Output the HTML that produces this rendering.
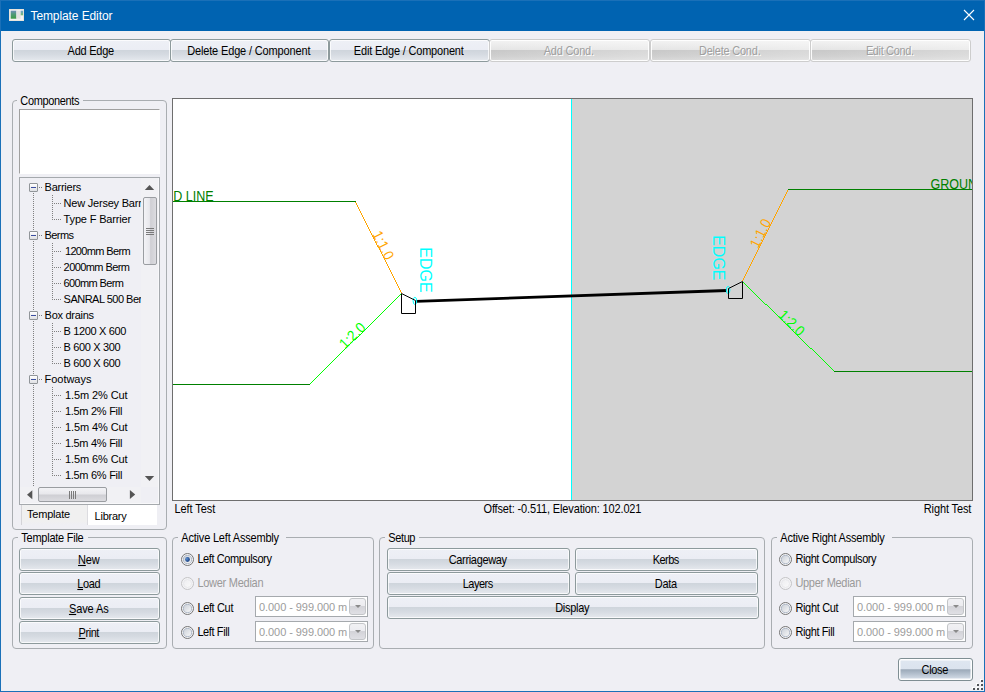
<!DOCTYPE html>
<html>
<head>
<meta charset="utf-8">
<title>Template Editor</title>
<style>
*{box-sizing:border-box;margin:0;padding:0}
html,body{width:985px;height:692px;overflow:hidden}
body{position:relative;background:#efeff4;font-family:"Liberation Sans",sans-serif;font-size:11px;color:#000}
.abs{position:absolute}
#win{position:absolute;left:0;top:0;width:985px;height:692px;border:1px solid #1a70b8;border-top:none;background:#efeff4}
#title{position:absolute;left:0;top:0;width:985px;height:31px;background:#0063b1;color:#fff;border-top:1px solid #1a70b8;border-left:1px solid #1a70b8;border-right:1px solid #1a70b8}
#title .t{position:absolute;left:29.5px;top:8px;font-size:12px;line-height:15px;white-space:nowrap;letter-spacing:-.1px}
.s{display:inline-block;transform:scaleY(1.08);transform-origin:50% 0;white-space:nowrap}
.btn{position:absolute;height:23px;border:1px solid #8d9a9c;border-radius:3px;
 background:linear-gradient(to bottom,#eef0f6 0,#ebedf4 46%,#cfd5dc 50%,#d6dbe2 70%,#e6e9ee 100%);
 box-shadow:inset 0 0 0 1px rgba(255,255,255,.75);
 text-align:center;line-height:21px;font-size:11px;white-space:nowrap;color:#000;padding-right:1.5px}
.btn .s{line-height:15px;vertical-align:top;margin-top:3px}
.btn.dis{color:#a0a0a0;border-color:#cdcdcd;text-shadow:1px 1px 0 #fff;box-shadow:inset 0 0 0 1px rgba(255,255,255,.9);
 background:linear-gradient(to right,rgba(255,255,255,0) 0,rgba(255,255,255,.3) 100%),linear-gradient(to bottom,#f3f3f3 0,#e4e4e4 48%,#c8c8c8 50%,#cecece 75%,#dadada 100%)}
.btn.def{border-color:#7f8e93;box-shadow:inset 0 0 0 1.5px rgba(255,255,255,.95);background:linear-gradient(to bottom,#dfe7f1 0,#dbe3ee 47%,#9caab9 51%,#b5c1cf 72%,#dae2ec 100%)}
.gb{position:absolute;border:1px solid #a9adb1;border-radius:4px}
.gb>.lg{position:absolute;top:-8px;left:5px;padding:0 2px 0 3.3px;background:#efeff4;font-size:11px;line-height:15px;white-space:nowrap}
.rad{position:absolute;width:13px;height:13px;border-radius:50%;border:1px solid #6f7476;
 background:radial-gradient(circle at 50% 50%,#e8e8ec 0,#d4d6da 55%,#b9bcc0 100%);box-shadow:inset 0 0 0 1px #f4f4f6}
.rad.dis{border-color:#c2c4c6;background:#f2f2f5;box-shadow:none}
.rad.on::after{content:"";position:absolute;left:3px;top:3px;width:5px;height:5px;border-radius:50%;background:radial-gradient(circle at 40% 35%,#5f8fd0,#1c3f86)}
.rl{position:absolute;font-size:11px;line-height:15px;white-space:nowrap}
.rl.dis{color:#9a9a9a}
.cb{position:absolute;width:113px;height:21px;border:1px solid #a5a9ad;background:#fff}
.cb .tx{position:absolute;left:3px;top:2.7px;font-size:11px;line-height:15px;color:#9c9c9c;white-space:nowrap}
.cb .dd{position:absolute;right:1px;top:1px;width:17px;height:17px;border:1px solid #c3c5c8;border-radius:3px;
 background:linear-gradient(to bottom,#f1f1f4 0,#ececf0 46%,#d3d3d8 50%,#e0e0e5 100%)}
.cb .dd::after{content:"";position:absolute;left:4.5px;top:5.5px;border-left:3px solid transparent;border-right:3px solid transparent;border-top:3px solid #8a8a8a}
.tree{position:absolute;left:19px;top:177px;width:141px;height:328px;border:1px solid #a5a9ad;background:#efeff4;overflow:hidden}
.ti{position:absolute;font-size:11px;line-height:16px;white-space:nowrap}
.pm{position:absolute;width:9px;height:9px;border:1px solid #919599;border-radius:1px;background:linear-gradient(#fff,#dfe0e4)}
.pm::after{content:"";position:absolute;left:1px;top:3px;width:5px;height:1px;background:#3b4ea0}
.dv{position:absolute;width:1px;background:repeating-linear-gradient(to bottom,#808080 0,#808080 1px,transparent 1px,transparent 2px)}
.dh{position:absolute;height:1px;background:repeating-linear-gradient(to right,#808080 0,#808080 1px,transparent 1px,transparent 2px)}
.vth{border:1px solid #9a9da1;border-radius:2px;background:linear-gradient(to right,#f3f3f6 0,#e8e8ec 45%,#cfcfd4 55%,#dcdce0 100%)}
.hth{border:1px solid #9a9da1;border-radius:2px;background:linear-gradient(to bottom,#f3f3f6 0,#e8e8ec 45%,#cfcfd4 55%,#dcdce0 100%)}
</style>
</head>
<body>
<div id="win"></div>
<div id="title">
 <svg class="abs" style="left:8px;top:8px" width="15" height="12" viewBox="0 0 15 12">
  <defs><linearGradient id="ig" x1="0" y1="0" x2="0" y2="1"><stop offset="0" stop-color="#6f8fb8"/><stop offset=".45" stop-color="#4f9a78"/><stop offset="1" stop-color="#3a9a44"/></linearGradient>
  <linearGradient id="ig2" x1="0" y1="0" x2="0" y2="1"><stop offset="0" stop-color="#6f9fd4"/><stop offset="1" stop-color="#74bd6c"/></linearGradient></defs>
  <rect x="0" y="0" width="15" height="12" fill="#e4e0d8"/>
  <rect x=".8" y=".8" width="13.4" height="10.4" fill="#f3f3f3"/>
  <rect x="1.7" y="1.7" width="5.7" height="8" fill="url(#ig)"/>
  <rect x="7.4" y="1.7" width="4.3" height="8" fill="#e1e1e1"/>
  <rect x="11.7" y="1.7" width="2.4" height="4.6" fill="url(#ig2)"/>
 </svg>
 <div class="t">Template Editor</div>
 <svg class="abs" style="left:962px;top:8px" width="12" height="12" viewBox="0 0 12 12"><path d="M1 1 L11 11 M11 1 L1 11" stroke="#fff" stroke-width="1.1" fill="none"/></svg>
</div>
<svg width="0" height="0" style="position:absolute"><defs><linearGradient id="rg" x1="0" y1="0" x2="1" y2="1"><stop offset="0" stop-color="#c9ced6"/><stop offset="1" stop-color="#fafafa"/></linearGradient><linearGradient id="rgd" x1="0" y1="0" x2="1" y2="1"><stop offset="0" stop-color="#ededf0"/><stop offset="1" stop-color="#fafafa"/></linearGradient><radialGradient id="rdot" cx=".35" cy=".35" r=".8"><stop offset="0" stop-color="#5d8fd2"/><stop offset=".6" stop-color="#2a5596"/><stop offset="1" stop-color="#1c3a78"/></radialGradient></defs></svg>
<div class="btn" style="left:12px;top:39px;width:159px"><span class="s" style="letter-spacing:-0.254px">Add Edge</span></div>
<div class="btn" style="left:170px;top:39px;width:159px"><span class="s" style="letter-spacing:-0.148px">Delete Edge / Component</span></div>
<div class="btn" style="left:329px;top:39px;width:161px"><span class="s" style="letter-spacing:-0.188px">Edit Edge / Component</span></div>
<div class="btn dis" style="left:489px;top:39px;width:161px"><span class="s" style="letter-spacing:-0.198px">Add Cond.</span></div>
<div class="btn dis" style="left:650px;top:39px;width:161px"><span class="s" style="letter-spacing:-0.227px">Delete Cond.</span></div>
<div class="btn dis" style="left:810px;top:39px;width:161px"><span class="s" style="letter-spacing:-0.367px">Edit Cond.</span></div>
<div class="gb" style="left:12px;top:100px;width:155px;height:430px"><div class="lg" style="left:4px;padding-right:3.6px"><span class="s" style="letter-spacing:-0.348px">Components</span></div></div>
<div class="abs" style="left:19px;top:109px;width:141px;height:65px;border:1px solid #a0a0a0;border-right-color:#fff;border-bottom-color:#fff;background:#fff"></div>
<div class="tree">
<div class="dv" style="left:13px;top:15px;height:37px"></div>
<div class="dv" style="left:13px;top:63px;height:69px"></div>
<div class="dv" style="left:13px;top:143px;height:53px"></div>
<div class="dv" style="left:13px;top:207px;height:101px"></div>
<div class="dh" style="left:19px;top:9px;width:3px"></div>
<div class="pm" style="left:9px;top:5px"></div>
<div class="ti" style="left:24.6px;top:1px"><span style="letter-spacing:-0.252px">Barriers</span></div>
<div class="dv" style="left:32px;top:17px;height:25px"></div>
<div class="dh" style="left:32px;top:25px;width:9px"></div>
<div class="ti" style="left:43.6px;top:17px"><span style="letter-spacing:-0.220px">New Jersey Barrier</span></div>
<div class="dh" style="left:32px;top:41px;width:9px"></div>
<div class="ti" style="left:43.6px;top:33px"><span style="letter-spacing:-0.163px">Type F Barrier</span></div>
<div class="dh" style="left:19px;top:57px;width:3px"></div>
<div class="pm" style="left:9px;top:53px"></div>
<div class="ti" style="left:24.6px;top:49px"><span style="letter-spacing:-0.596px">Berms</span></div>
<div class="dv" style="left:32px;top:65px;height:57px"></div>
<div class="dh" style="left:32px;top:73px;width:9px"></div>
<div class="ti" style="left:44.9px;top:65px"><span style="letter-spacing:-0.631px">1200mm Berm</span></div>
<div class="dh" style="left:32px;top:89px;width:9px"></div>
<div class="ti" style="left:43.6px;top:81px"><span style="letter-spacing:-0.576px">2000mm Berm</span></div>
<div class="dh" style="left:32px;top:105px;width:9px"></div>
<div class="ti" style="left:43.6px;top:97px"><span style="letter-spacing:-0.643px">600mm Berm</span></div>
<div class="dh" style="left:32px;top:121px;width:9px"></div>
<div class="ti" style="left:43.6px;top:113px"><span style="letter-spacing:-0.510px">SANRAL 500 Berm</span></div>
<div class="dh" style="left:19px;top:137px;width:3px"></div>
<div class="pm" style="left:9px;top:133px"></div>
<div class="ti" style="left:24.6px;top:129px"><span style="letter-spacing:-0.278px">Box drains</span></div>
<div class="dv" style="left:32px;top:145px;height:41px"></div>
<div class="dh" style="left:32px;top:153px;width:9px"></div>
<div class="ti" style="left:43.6px;top:145px"><span style="letter-spacing:-0.356px">B 1200 X 600</span></div>
<div class="dh" style="left:32px;top:169px;width:9px"></div>
<div class="ti" style="left:43.6px;top:161px"><span style="letter-spacing:-0.342px">B 600 X 300</span></div>
<div class="dh" style="left:32px;top:185px;width:9px"></div>
<div class="ti" style="left:43.6px;top:177px"><span style="letter-spacing:-0.342px">B 600 X 600</span></div>
<div class="dh" style="left:19px;top:201px;width:3px"></div>
<div class="pm" style="left:9px;top:197px"></div>
<div class="ti" style="left:24.6px;top:193px"><span style="letter-spacing:-0.035px">Footways</span></div>
<div class="dv" style="left:32px;top:209px;height:89px"></div>
<div class="dh" style="left:32px;top:217px;width:9px"></div>
<div class="ti" style="left:44.9px;top:209px"><span style="letter-spacing:-0.081px">1.5m 2% Cut</span></div>
<div class="dh" style="left:32px;top:233px;width:9px"></div>
<div class="ti" style="left:44.9px;top:225px"><span style="letter-spacing:-0.278px">1.5m 2% Fill</span></div>
<div class="dh" style="left:32px;top:249px;width:9px"></div>
<div class="ti" style="left:44.9px;top:241px"><span style="letter-spacing:-0.081px">1.5m 4% Cut</span></div>
<div class="dh" style="left:32px;top:265px;width:9px"></div>
<div class="ti" style="left:44.9px;top:257px"><span style="letter-spacing:-0.278px">1.5m 4% Fill</span></div>
<div class="dh" style="left:32px;top:281px;width:9px"></div>
<div class="ti" style="left:44.9px;top:273px"><span style="letter-spacing:-0.081px">1.5m 6% Cut</span></div>
<div class="dh" style="left:32px;top:297px;width:9px"></div>
<div class="ti" style="left:44.9px;top:289px"><span style="letter-spacing:-0.278px">1.5m 6% Fill</span></div>

<div class="abs" style="left:121px;top:0;width:17px;height:309px;background:#f1f1f4"></div>
<div class="abs" style="left:0;top:309px;width:121px;height:16px;background:#f1f1f4"></div>
<div class="abs" style="left:138px;top:0;width:1px;height:326px;background:#f8f8fa"></div>
<div class="abs" style="left:0;top:325px;width:139px;height:1px;background:#f8f8fa"></div>
<svg class="abs" style="left:0;top:0" width="139" height="326" viewBox="0 0 139 326">
 <path d="M124.8 12 L129.5 7 L134.2 12 Z" fill="#555"/>
 <path d="M124.8 298 L129.5 303 L134.2 298 Z" fill="#555"/>
 <path d="M12.3 312.3 L7 316.8 L12.3 321.3 Z" fill="#555"/>
 <path d="M109.9 312 L115.2 316.5 L109.9 321 Z" fill="#555"/>
</svg>
<div class="abs vth" style="left:122.8px;top:18.7px;width:14px;height:68.5px"></div>
<svg class="abs" style="left:126px;top:50px" width="8" height="8" viewBox="0 0 8 8" shape-rendering="crispEdges"><path d="M0 .5H8M0 2.5H8M0 4.5H8M0 6.5H8" stroke="#7a7a7a" stroke-width="1"/></svg>
<div class="abs hth" style="left:18.4px;top:309.4px;width:68.2px;height:14.4px"></div>
<svg class="abs" style="left:49px;top:313px" width="8" height="8" viewBox="0 0 8 8" shape-rendering="crispEdges"><path d="M.5 0V8M2.5 0V8M4.5 0V8M6.5 0V8" stroke="#7a7a7a" stroke-width="1"/></svg>
</div>
<div class="abs" style="left:21px;top:505px;width:67px;height:20px;border-left:1px solid #d4d4d8;border-right:1px solid #dcdce0;background:linear-gradient(to bottom,#f0f0f0 0,#f0f0f0 80%,#efeff4 100%);font-size:11px;line-height:15px"><span class="abs" style="left:5px;top:2px;letter-spacing:-0.205px">Template</span></div>
<div class="abs" style="left:88px;top:505px;width:69px;height:20px;background:#fff;font-size:11px;line-height:15px"><span class="abs" style="left:6.5px;top:4px;letter-spacing:-0.218px">Library</span></div>
<div class="abs" style="left:172px;top:98px;width:801px;height:403px;border:1px solid #6e6e6e;background:#fff;overflow:hidden">
<svg class="abs" style="left:0;top:0" width="799" height="401" viewBox="173 99 799 401" font-family="Liberation Sans, sans-serif">
<rect x="572" y="99" width="400" height="401" fill="#d3d3d3"/>
<rect x="571" y="99" width="1" height="401" fill="#00ffff"/>
<g fill="none" stroke-width="1" shape-rendering="crispEdges">
<path d="M173 201.5H356M173 384.5H310M788 189.5H972M834 371.5H972" stroke="#008000"/>
<path d="M355.5 202v1M356.5 203v2M357.5 205v2M358.5 207v2M359.5 209v2M360.5 211v2M361.5 213v2M362.5 215v2M363.5 217v2M364.5 219v2M365.5 221v2M366.5 223v2M367.5 225v2M368.5 227v2M369.5 229v2M370.5 231v2M371.5 233v2M372.5 235v2M373.5 237v2M374.5 239v2M375.5 241v2M376.5 243v2M377.5 245v2M378.5 247v1M379.5 248v2M380.5 250v2M381.5 252v2M382.5 254v2M383.5 256v2M384.5 258v2M385.5 260v2M386.5 262v2M387.5 264v2M388.5 266v2M389.5 268v2M390.5 270v2M391.5 272v2M392.5 274v2M393.5 276v2M394.5 278v2M395.5 280v2M396.5 282v2M397.5 284v2M398.5 286v2M399.5 288v2M400.5 290v2M401.5 292v1" stroke="#ffa500"/>
<path d="M400 294.5h1M399 295.5h1M398 296.5h1M397 297.5h1M396 298.5h1M395 299.5h1M394 300.5h1M393 301.5h1M392 302.5h1M391 303.5h1M390 304.5h1M389 305.5h1M388 306.5h1M387 307.5h1M386 308.5h1M385 309.5h1M384 310.5h1M383 311.5h1M382 312.5h1M381 313.5h1M380 314.5h1M379 315.5h1M378 316.5h1M377 317.5h1M376 318.5h1M375 319.5h1M374 320.5h1M373 321.5h1M372 322.5h1M371 323.5h1M370 324.5h1M369 325.5h1M368 326.5h1M367 327.5h1M366 328.5h1M365 329.5h1M364 330.5h1M363 331.5h1M362 332.5h1M361 333.5h1M360 334.5h1M359 335.5h1M358 336.5h1M357 337.5h1M356 338.5h1M354 339.5h2M353 340.5h1M352 341.5h1M351 342.5h1M350 343.5h1M349 344.5h1M348 345.5h1M347 346.5h1M346 347.5h1M345 348.5h1M344 349.5h1M343 350.5h1M342 351.5h1M341 352.5h1M340 353.5h1M339 354.5h1M338 355.5h1M337 356.5h1M336 357.5h1M335 358.5h1M334 359.5h1M333 360.5h1M332 361.5h1M331 362.5h1M330 363.5h1M329 364.5h1M328 365.5h1M327 366.5h1M326 367.5h1M325 368.5h1M324 369.5h1M323 370.5h1M322 371.5h1M321 372.5h1M320 373.5h1M319 374.5h1M318 375.5h1M317 376.5h1M316 377.5h1M315 378.5h1M314 379.5h1M313 380.5h1M312 381.5h1M311 382.5h1M310 383.5h1" stroke="#00ff00"/>
<path d="M787.5 190v2M786.5 192v2M785.5 194v2M784.5 196v2M783.5 198v2M782.5 200v2M781.5 202v2M780.5 204v2M779.5 206v2M778.5 208v2M777.5 210v2M776.5 212v2M775.5 214v2M774.5 216v2M773.5 218v2M772.5 220v2M771.5 222v2M770.5 224v2M769.5 226v2M768.5 228v2M767.5 230v2M766.5 232v2M765.5 234v2M764.5 236v2M763.5 238v2M762.5 240v2M761.5 242v2M760.5 244v2M759.5 246v2M758.5 248v2M757.5 250v2M756.5 252v2M755.5 254v2M754.5 256v2M753.5 258v2M752.5 260v2M751.5 262v2M750.5 264v2M749.5 266v2M748.5 268v2M747.5 270v2M746.5 272v2M745.5 274v2M744.5 276v2M743.5 278v2M742.5 280v1" stroke="#ffa500"/>
<path d="M743 282.5h1M744 283.5h1M745 284.5h1M746 285.5h1M747 286.5h1M748 287.5h1M749 288.5h1M750 289.5h1M751 290.5h1M752 291.5h1M753 292.5h1M754 293.5h1M755 294.5h1M756 295.5h1M757 296.5h1M758 297.5h1M759 298.5h1M760 299.5h1M761 300.5h1M762 301.5h1M763 302.5h1M764 303.5h1M765 304.5h2M767 305.5h1M768 306.5h1M769 307.5h1M770 308.5h1M771 309.5h1M772 310.5h1M773 311.5h1M774 312.5h1M775 313.5h1M776 314.5h1M777 315.5h1M778 316.5h1M779 317.5h1M780 318.5h1M781 319.5h1M782 320.5h1M783 321.5h1M784 322.5h1M785 323.5h1M786 324.5h1M787 325.5h1M788 326.5h1M789 327.5h1M790 328.5h1M791 329.5h1M792 330.5h1M793 331.5h1M794 332.5h1M795 333.5h1M796 334.5h1M797 335.5h1M798 336.5h1M799 337.5h1M800 338.5h1M801 339.5h1M802 340.5h1M803 341.5h1M804 342.5h1M805 343.5h1M806 344.5h1M807 345.5h1M808 346.5h1M809 347.5h1M810 348.5h2M812 349.5h1M813 350.5h1M814 351.5h1M815 352.5h1M816 353.5h1M817 354.5h1M818 355.5h1M819 356.5h1M820 357.5h1M821 358.5h1M822 359.5h1M823 360.5h1M824 361.5h1M825 362.5h1M826 363.5h1M827 364.5h1M828 365.5h1M829 366.5h1M830 367.5h1M831 368.5h1M832 369.5h1M833 370.5h1" stroke="#00ff00"/>
</g>
<text x="213.7" y="200.7" text-anchor="end" fill="#008000" font-size="14.6" textLength="87" lengthAdjust="spacingAndGlyphs">GROUND LINE</text>
<text x="930.5" y="188.7" fill="#008000" font-size="14.6" textLength="87" lengthAdjust="spacingAndGlyphs">GROUND LINE</text>

<text x="378.8" y="247.5" transform="rotate(63.2 378.8 247.5)" text-anchor="middle" fill="#ffa500" font-size="14.6" textLength="30" lengthAdjust="spacingAndGlyphs">1:1.0</text>
<text x="355.8" y="339.0" transform="rotate(-44.5 355.8 339.0)" text-anchor="middle" fill="#00ff00" font-size="14.6" textLength="30" lengthAdjust="spacingAndGlyphs">1:2.0</text>
<text x="765.0" y="235.5" transform="rotate(-63.4 765.0 235.5)" text-anchor="middle" fill="#ffa500" font-size="14.6" textLength="30" lengthAdjust="spacingAndGlyphs">1:1.0</text>
<text x="788.2" y="326.5" transform="rotate(44.2 788.2 326.5)" text-anchor="middle" fill="#00ff00" font-size="14.6" textLength="30" lengthAdjust="spacingAndGlyphs">1:2.0</text>
<path d="M416.2 301.4 L727 290.5" stroke="#000" stroke-width="2.8" fill="none"/>
<ellipse cx="414.9" cy="300.9" rx="1.8" ry="3.6" fill="none" stroke="#00ffff" stroke-width="1"/>
<ellipse cx="728.1" cy="290" rx="1.8" ry="3.6" fill="none" stroke="#00ffff" stroke-width="1"/>
<path d="M401.5 293.5 L401.5 313.5 L415.5 313.5 L415.5 300.5 Z" fill="none" stroke="#000" stroke-width="1"/>
<path d="M742.5 281.5 L742.5 298.5 L728.5 298.5 L728.5 288.5 Z" fill="none" stroke="#000" stroke-width="1"/>
<text x="420.4" y="247.3" transform="rotate(90 420.4 247.3)" fill="#00ffff" font-size="16">EDGE</text>
<text x="712.8" y="235.2" transform="rotate(90 712.8 235.2)" fill="#00ffff" font-size="16">EDGE</text>
</svg>
</div>
<div class="rl" style="left:174.4px;top:501px"><span class="s" style="letter-spacing:-0.066px">Left Test</span></div>
<div class="rl" style="left:483.5px;top:501px"><span class="s" style="letter-spacing:-0.149px">Offset: -0.511, Elevation: 102.021</span></div>
<div class="rl" style="right:13.7px;top:501px"><span class="s" style="letter-spacing:-0.112px">Right Test</span></div>
<div class="gb" style="left:12px;top:537px;width:155px;height:112px"><div class="lg" style="left:5px;padding-right:4px"><span class="s" style="letter-spacing:-0.248px">Template File</span></div></div>
<div class="btn" style="left:19px;top:548px;width:141px"><span class="s" style="letter-spacing:-0.205px"><u>N</u>ew</span></div>
<div class="btn" style="left:19px;top:572px;width:141px"><span class="s" style="letter-spacing:-0.421px"><u>L</u>oad</span></div>
<div class="btn" style="left:19px;top:596.5px;width:141px"><span class="s" style="letter-spacing:-0.108px"><u>S</u>ave As</span></div>
<div class="btn" style="left:19px;top:621px;width:141px"><span class="s" style="letter-spacing:-0.425px"><u>P</u>rint</span></div>
<div class="gb" style="left:172px;top:537px;width:202px;height:112px"><div class="lg" style="left:5px;padding-right:6.7px"><span class="s" style="letter-spacing:-0.195px">Active Left Assembly</span></div></div>
<svg class="abs" style="left:181px;top:553px" width="13" height="13" viewBox="0 0 13 13"><circle cx="6.5" cy="6.5" r="6" fill="#f4f4f6" stroke="#747474"/><circle cx="6.5" cy="6.5" r="4.1" fill="url(#rg)" stroke="#9fabbd" stroke-width=".8"/><circle cx="6.5" cy="6.5" r="2.4" fill="url(#rdot)"/></svg>
<div class="rl" style="left:197.4px;top:551px"><span class="s" style="letter-spacing:-0.400px">Left Compulsory</span></div>
<svg class="abs" style="left:181px;top:577px" width="13" height="13" viewBox="0 0 13 13"><circle cx="6.5" cy="6.5" r="6" fill="#f3f3f5" stroke="#c4c4c6"/><circle cx="6.5" cy="6.5" r="4" fill="url(#rgd)" stroke="#e4e4e8" stroke-width=".7"/></svg>
<div class="rl dis" style="left:197.4px;top:575px"><span class="s" style="letter-spacing:-0.266px">Lower Median</span></div>
<svg class="abs" style="left:181px;top:601.5px" width="13" height="13" viewBox="0 0 13 13"><circle cx="6.5" cy="6.5" r="6" fill="#f4f4f6" stroke="#747474"/><circle cx="6.5" cy="6.5" r="4.1" fill="url(#rg)" stroke="#9fabbd" stroke-width=".8"/></svg>
<div class="rl" style="left:197.4px;top:599.5px"><span class="s" style="letter-spacing:-0.354px">Left Cut</span></div>
<svg class="abs" style="left:181px;top:626px" width="13" height="13" viewBox="0 0 13 13"><circle cx="6.5" cy="6.5" r="6" fill="#f4f4f6" stroke="#747474"/><circle cx="6.5" cy="6.5" r="4.1" fill="url(#rg)" stroke="#9fabbd" stroke-width=".8"/></svg>
<div class="rl" style="left:197.4px;top:624px"><span class="s" style="letter-spacing:-0.397px">Left Fill</span></div>
<div class="cb" style="left:255px;top:596px"><div class="tx"><span style="letter-spacing:-0.065px">0.000 - 999.000 m</span></div><div class="dd"></div></div>
<div class="cb" style="left:255px;top:621px"><div class="tx"><span style="letter-spacing:-0.065px">0.000 - 999.000 m</span></div><div class="dd"></div></div>
<div class="gb" style="left:379px;top:537px;width:386px;height:112px"><div class="lg" style="left:5px;padding-right:4.3px"><span class="s" style="letter-spacing:-0.390px">Setup</span></div></div>
<div class="btn" style="left:387px;top:548px;width:183px"><span class="s" style="letter-spacing:-0.332px">Carriageway</span></div>
<div class="btn" style="left:575px;top:548px;width:183px"><span class="s" style="letter-spacing:-0.570px">Kerbs</span></div>
<div class="btn" style="left:387px;top:572px;width:183px"><span class="s" style="letter-spacing:-0.489px">Layers</span></div>
<div class="btn" style="left:575px;top:572px;width:183px"><span class="s" style="letter-spacing:-0.338px">Data</span></div>
<div class="btn" style="left:387px;top:596px;width:372px"><span class="s" style="letter-spacing:-0.283px">Display</span></div>
<div class="gb" style="left:771px;top:537px;width:202px;height:112px"><div class="lg" style="left:5px;padding-right:7px"><span class="s" style="letter-spacing:-0.220px">Active Right Assembly</span></div></div>
<svg class="abs" style="left:779px;top:553px" width="13" height="13" viewBox="0 0 13 13"><circle cx="6.5" cy="6.5" r="6" fill="#f4f4f6" stroke="#747474"/><circle cx="6.5" cy="6.5" r="4.1" fill="url(#rg)" stroke="#9fabbd" stroke-width=".8"/></svg>
<div class="rl" style="left:795.4px;top:551px"><span class="s" style="letter-spacing:-0.414px">Right Compulsory</span></div>
<svg class="abs" style="left:779px;top:577px" width="13" height="13" viewBox="0 0 13 13"><circle cx="6.5" cy="6.5" r="6" fill="#f3f3f5" stroke="#c4c4c6"/><circle cx="6.5" cy="6.5" r="4" fill="url(#rgd)" stroke="#e4e4e8" stroke-width=".7"/></svg>
<div class="rl dis" style="left:795.4px;top:575px"><span class="s" style="letter-spacing:-0.291px">Upper Median</span></div>
<svg class="abs" style="left:779px;top:601.5px" width="13" height="13" viewBox="0 0 13 13"><circle cx="6.5" cy="6.5" r="6" fill="#f4f4f6" stroke="#747474"/><circle cx="6.5" cy="6.5" r="4.1" fill="url(#rg)" stroke="#9fabbd" stroke-width=".8"/></svg>
<div class="rl" style="left:795.4px;top:599.5px"><span class="s" style="letter-spacing:-0.329px">Right Cut</span></div>
<svg class="abs" style="left:779px;top:626px" width="13" height="13" viewBox="0 0 13 13"><circle cx="6.5" cy="6.5" r="6" fill="#f4f4f6" stroke="#747474"/><circle cx="6.5" cy="6.5" r="4.1" fill="url(#rg)" stroke="#9fabbd" stroke-width=".8"/></svg>
<div class="rl" style="left:795.4px;top:624px"><span class="s" style="letter-spacing:-0.390px">Right Fill</span></div>
<div class="cb" style="left:853px;top:596px"><div class="tx"><span style="letter-spacing:-0.065px">0.000 - 999.000 m</span></div><div class="dd"></div></div>
<div class="cb" style="left:853px;top:621px"><div class="tx"><span style="letter-spacing:-0.065px">0.000 - 999.000 m</span></div><div class="dd"></div></div>
<div class="btn def" style="left:898px;top:658px;width:75px"><span class="s" style="letter-spacing:-0.365px">Close</span></div>
<svg class="abs" style="left:960px;top:670px" width="24" height="21" viewBox="0 0 24 21" shape-rendering="crispEdges"><rect x="12" y="17" width="2" height="2" fill="#fff"/><rect x="16" y="17" width="2" height="2" fill="#fff"/><rect x="20" y="17" width="2" height="2" fill="#fff"/><rect x="16" y="13" width="2" height="2" fill="#fff"/><rect x="20" y="13" width="2" height="2" fill="#fff"/><rect x="20" y="9" width="2" height="2" fill="#fff"/><rect x="13" y="18" width="2" height="2" fill="#505359"/><rect x="17" y="18" width="2" height="2" fill="#505359"/><rect x="21" y="18" width="2" height="2" fill="#505359"/><rect x="17" y="14" width="2" height="2" fill="#505359"/><rect x="21" y="14" width="2" height="2" fill="#505359"/><rect x="21" y="10" width="2" height="2" fill="#505359"/></svg>
</body>
</html>
